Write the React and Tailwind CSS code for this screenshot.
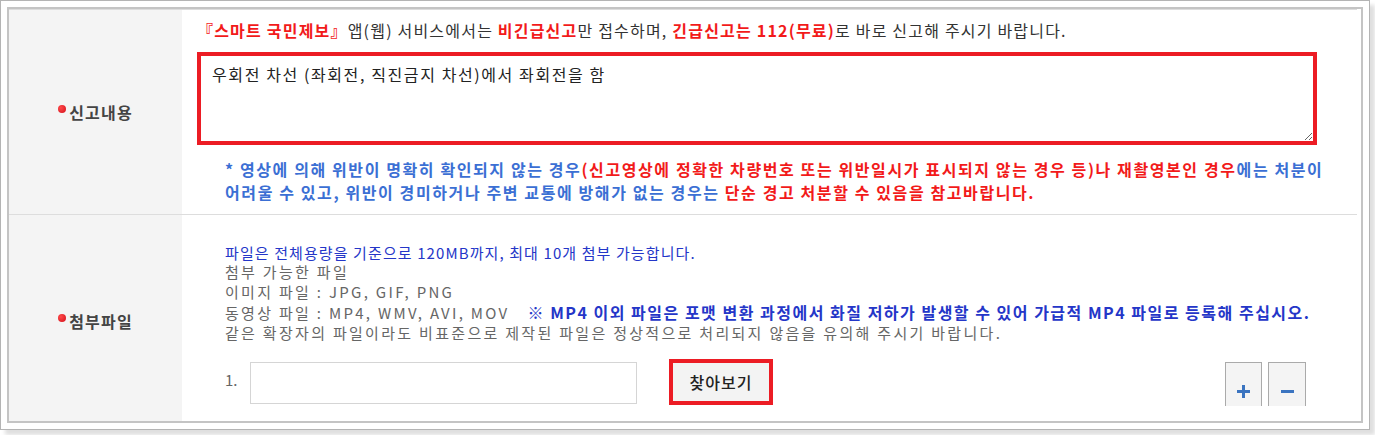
export default function App() {
  return (
    <div className="w-[1375px] h-[435px] bg-white font-['Noto_Sans_CJK_KR','Noto_Sans',sans-serif]">
      <div className="w-[1370px] h-[430px] border border-[#b4b4b4] p-[6px] shadow-[5px_5px_4px_rgba(0,0,0,0.13)] bg-white">
        <div className="h-full border-2 border-[#c4c4c4] overflow-hidden">
          <div className="w-[1348px] border-t border-[#dddddd]">
            {/* Row 1 */}
            <div className="flex border-b border-[#dddddd]">
              <div className="w-[173px] shrink-0 bg-[#f4f4f4] flex items-center justify-center">
                <span className="w-[8px] h-[8px] rounded-full bg-[radial-gradient(circle_at_35%_35%,#ff4a4a,#d40f1a)] mb-[6px] mr-[3px]" />
                <span className="text-[16px] font-bold tracking-[1.2px] text-[#444444]">신고내용</span>
              </div>
              <div className="flex-1 pl-[15px] pt-[9px] pb-[10px]">
                <p className="text-[16px] leading-[22px] tracking-[1.2px] text-[#333333] whitespace-nowrap">
                  <span className="text-[#f21a1a] font-bold">『스마트 국민제보』</span>앱(웹) 서비스에서는{" "}
                  <span className="text-[#f21a1a] font-bold">비긴급신고</span>만 접수하며,{" "}
                  <span className="text-[#f21a1a] font-bold">긴급신고는 112(무료)</span>로 바로 신고해 주시기 바랍니다.
                </p>
                <textarea
                  className="block mt-[11px] w-[1120px] h-[93px] border-4 border-[#ec1c24] px-[11px] py-[7px] text-[16px] leading-[22px] tracking-[1.6px] text-[#222222] outline-none bg-white"
                  defaultValue="우회전 차선 (좌회전, 직진금지 차선)에서 좌회전을 함"
                />
                <p className="mt-[13px] pl-[28px] text-[16px] leading-[23px] tracking-[1.6px] font-bold text-[#3b6fd4] whitespace-nowrap">
                  * 영상에 의해 위반이 명확히 확인되지 않는 경우
                  <span className="text-[#f21a1a]">(신고영상에 정확한 차량번호 또는 위반일시가 표시되지 않는 경우 등)나 재촬영본인 경우</span>
                  에는 처분이
                  <br />
                  어려울 수 있고, 위반이 경미하거나 주변 교통에 방해가 없는 경우는{" "}
                  <span className="text-[#f21a1a]">단순 경고 처분할 수 있음을 참고바랍니다.</span>
                </p>
              </div>
            </div>
            {/* Row 2 */}
            <div className="flex h-[212px]">
              <div className="w-[173px] shrink-0 bg-[#f4f4f4] flex items-center justify-center">
                <span className="w-[8px] h-[8px] rounded-full bg-[radial-gradient(circle_at_35%_35%,#ff4a4a,#d40f1a)] mb-[6px] mr-[3px]" />
                <span className="text-[16px] font-bold tracking-[1.2px] text-[#444444]">첨부파일</span>
              </div>
              <div className="flex-1 pl-[43px] pt-[29px]">
                <p className="text-[15px] leading-[18px] tracking-[1.1px] text-[#2436c8] whitespace-nowrap">
                  파일은 전체용량을 기준으로 120MB까지, 최대 10개 첨부 가능합니다.
                </p>
                <p className="text-[15px] leading-[20px] tracking-[2.3px] text-[#666666] whitespace-nowrap">
                  첨부 가능한 파일
                  <br />
                  이미지 파일 : JPG, GIF, PNG
                  <br />
                  동영상 파일 : MP4, WMV, AVI, MOV
                  <span className="ml-[18px] text-[16px] tracking-[1.5px] font-bold text-[#2436c8]">
                    ※ MP4 이외 파일은 포맷 변환 과정에서 화질 저하가 발생할 수 있어 가급적 MP4 파일로 등록해 주십시오.
                  </span>
                  <br />
                  같은 확장자의 파일이라도 비표준으로 제작된 파일은 정상적으로 처리되지 않음을 유의해 주시기 바랍니다.
                </p>
                <div className="flex items-start mt-[16px]">
                  <span className="w-[25px] mt-[11px] text-[15px] leading-[20px] text-[#666666]">1.</span>
                  <div className="mt-[3px] w-[387px] h-[42px] border border-[#d5d5d5] bg-white" />
                  <div className="ml-[32px] w-[104px] h-[46px] border-4 border-[#ec1c24] bg-[#f3f3f3] flex items-center justify-center">
                    <span className="text-[16px] font-medium tracking-[1px] text-[#222222]">찾아보기</span>
                  </div>
                  <div className="ml-[452px] mt-[3px] flex gap-[6px]">
                    <div className="w-[37px] h-[44px] border-t border-x border-[#aaaaaa] bg-[#f4f4f4] flex justify-center pt-[22px]">
                      <svg width="13" height="13" viewBox="0 0 13 13">
                        <rect x="5" y="0" width="3" height="13" fill="#3b74c0" />
                        <rect x="0" y="5" width="13" height="3" fill="#3b74c0" />
                      </svg>
                    </div>
                    <div className="w-[38px] h-[44px] border-t border-x border-[#aaaaaa] bg-[#f4f4f4] flex justify-center pt-[27px]">
                      <svg width="13" height="3" viewBox="0 0 13 3">
                        <rect x="0" y="0" width="13" height="3" fill="#3b74c0" />
                      </svg>
                    </div>
                  </div>
                </div>
              </div>
            </div>
          </div>
        </div>
      </div>
    </div>
  );
}
